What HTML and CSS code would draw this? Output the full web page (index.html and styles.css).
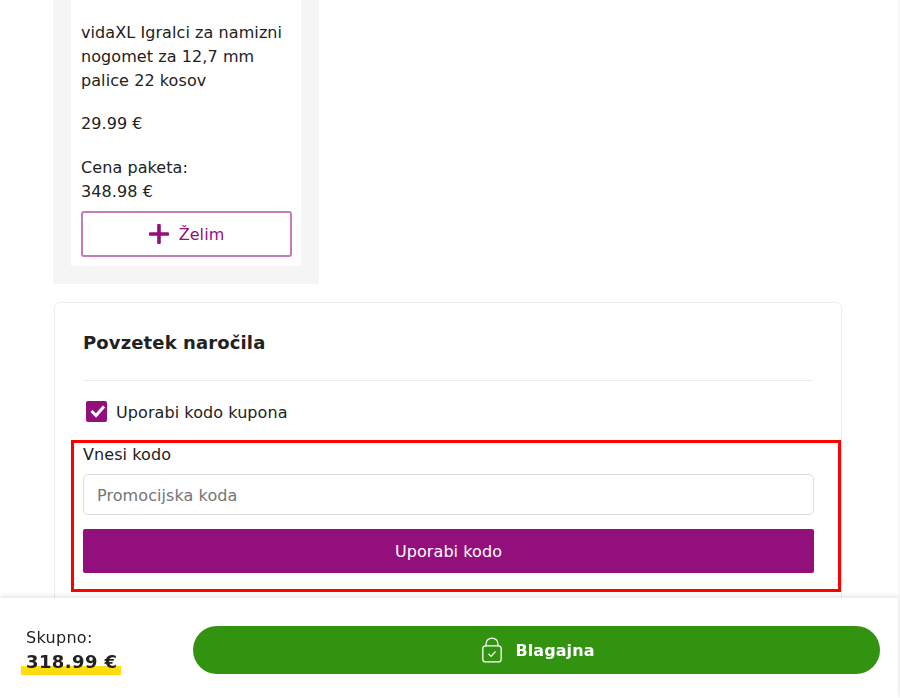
FILE: index.html
```html
<!DOCTYPE html>
<html lang="sl">
<head>
  <meta charset="UTF-8" />
  <meta name="viewport" content="width=device-width, initial-scale=1.0"/>
  <title>Košarica</title>
  <link rel="stylesheet" href="styles.css">
</head>
<body>

  <main class="page">
    <section class="bundle">
      <div class="bundle-card">
        <p class="bundle-name">vidaXL Igralci za namizni nogomet za 12,7 mm palice 22 kosov</p>
        <p class="bundle-price">29.99 €</p>
        <p class="bundle-total">Cena paketa:<br>348.98 €</p>
        <button class="btn-want">
          <svg class="icon-plus" viewBox="0 0 20 20" width="20" height="20"><path d="M10 1.5v17M1.5 10h17" fill="none" stroke="currentColor" stroke-width="3.6" stroke-linecap="round"/></svg>
          Želim
        </button>
      </div>
    </section>

    <section class="summary">
      <h2>Povzetek naročila</h2>
      <hr>
      <label class="coupon-check">
        <span class="checkbox">
          <svg viewBox="0 0 21 21" width="21" height="21"><path d="M5.5 10l4.5 4.5 8-9" fill="none" stroke="#fff" stroke-width="3"/></svg>
        </span>
        Uporabi kodo kupona
      </label>
      <div class="coupon-box">
        <label class="coupon-label" for="koda">Vnesi kodo</label>
        <input class="coupon-input" id="koda" type="text" placeholder="Promocijska koda">
        <button class="btn-apply">Uporabi kodo</button>
      </div>
    </section>
  </main>

  <footer class="checkout-bar">
    <div class="total">
      <span class="total-label">Skupno:</span>
      <strong class="total-value">318.99 €</strong>
    </div>
    <button class="btn-checkout">
      <svg viewBox="0 0 24 28" width="22" height="26" fill="none" stroke="#fff" stroke-width="1.4" stroke-linecap="round" stroke-linejoin="round">
        <rect x="2" y="9.5" width="20" height="17.5" rx="3"/>
        <path d="M5.5 9.5V7.5a6.5 6.5 0 0 1 13 0v2"/>
        <path d="M8.5 18.5l2.5 2.5 4.5-5"/>
      </svg>
      Blagajna
    </button>
  </footer>

</body>
</html>
```

FILE: styles.css
```css
:root {
  --color-purple: #930f7b;
  --color-green: #319310;
  --color-dark: #222;
  --color-line: #ececec;
}

* {
  margin: 0;
  padding: 0;
  box-sizing: border-box;
}

html, body {
  height: 698px;
  overflow: hidden;
}

body {
  font-family: "DejaVu Sans", Verdana, sans-serif;
  font-size: 16px;
  line-height: 24px;
  letter-spacing: 0.08px;
  color: var(--color-dark);
  background: #fff;
  border-right: 2px solid #f9f9f9;
}

button, input {
  font-family: inherit;
  letter-spacing: inherit;
}

button {
  cursor: pointer;
}

.page {
  padding-left: 53px;
}

.bundle {
  width: 266px;
  padding: 0 18px 18px;
  background: #f5f5f5;
}

.bundle-card {
  height: 266px;
  padding: 21px 10px 10px;
  background: #fff;
}

.bundle-price {
  margin-top: 19px;
}

.bundle-total {
  margin-top: 20px;
}

.btn-want {
  display: flex;
  align-items: center;
  justify-content: center;
  gap: 10px;
  width: 211px;
  height: 46px;
  margin-top: 7px;
  font-size: 16px;
  color: var(--color-purple);
  background: #fff;
  border: 2px solid #c47cb6;
  border-radius: 3px;
}

.summary {
  width: 788px;
  height: 330px;
  margin: 18px 0 0 1px;
  padding: 27px 28px 0;
  border: 1px solid var(--color-line);
  border-radius: 6px;
}

.summary h2 {
  font-size: 18px;
  line-height: 26px;
  font-weight: 700;
  letter-spacing: 0.12px;
}

.summary hr {
  margin-top: 24px;
  border: 0;
  border-top: 1px solid var(--color-line);
}

.coupon-check {
  display: flex;
  align-items: center;
  gap: 9px;
  margin: 20px 0 0 3px;
}

.checkbox {
  display: block;
  width: 21px;
  height: 21px;
  margin-top: -3px;
  background: var(--color-purple);
  border-radius: 2px;
}

.checkbox svg {
  display: block;
}

.coupon-box {
  display: flex;
  flex-direction: column;
  width: 770px;
  height: 152px;
  margin: 15px 0 0 -12px;
  padding: 0 24px 0 9px;
  border: 3px solid #f00;
}

.coupon-input {
  height: 41px;
  margin-top: 7px;
  padding: 2px 13px 0;
  font-size: 16px;
  background: #fff;
  border: 1px solid #ddd;
  border-radius: 5px;
}

.coupon-input::placeholder {
  color: #757575;
  opacity: 1;
}

.btn-apply {
  height: 44px;
  margin-top: 14px;
  font-size: 16px;
  font-weight: 500;
  color: #fff;
  background: var(--color-purple);
  border: 0;
  border-radius: 2px;
}

.checkout-bar {
  position: fixed;
  left: 0;
  right: 2px;
  bottom: 0;
  display: flex;
  align-items: center;
  gap: 72px;
  height: 100px;
  padding: 4px 18px 0 26px;
  background: #fff;
  box-shadow: 0 -2px 5px rgba(0,0,0,0.1);
}

.total {
  display: flex;
  flex-direction: column;
  align-items: flex-start;
  width: 95px;
  flex: none;
}

.total-label {
  margin-bottom: -2px;
  letter-spacing: 0.3px;
}

.total-value {
  margin: 1px 0 0 -5px;
  padding: 0 4px 0 5px;
  font-size: 18px;
  line-height: 26px;
  letter-spacing: 0.4px;
  white-space: nowrap;
  background: linear-gradient(transparent 17px, #ffdd0f 17px);
}

.btn-checkout {
  flex: 1;
  display: flex;
  align-items: center;
  justify-content: center;
  gap: 12px;
  height: 48px;
  padding-left: 3px;
  font-size: 16px;
  font-weight: 700;
  letter-spacing: 0.1px;
  color: #fff;
  background: var(--color-green);
  border: 0;
  border-radius: 24px;
}
```
